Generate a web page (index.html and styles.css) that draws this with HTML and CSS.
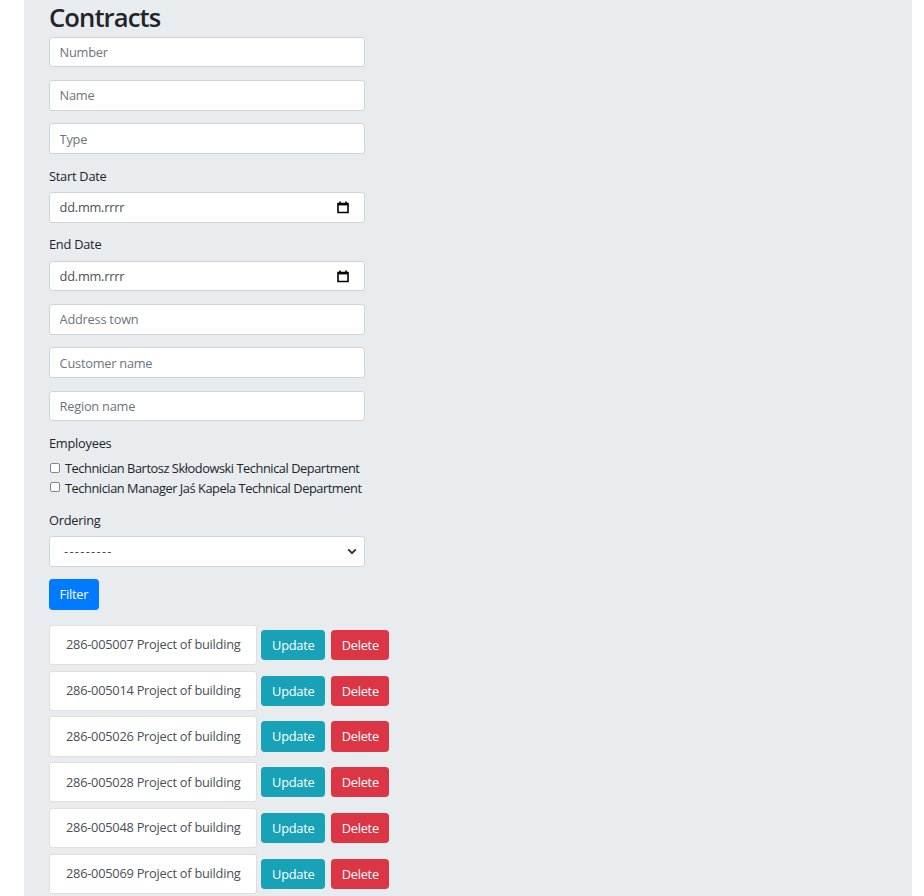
FILE: index.html
```html
<!DOCTYPE html>
<html lang="pl">
<head>
<meta charset="utf-8">
<title>Contracts</title>
<link rel="stylesheet" href="styles.css">
</head>
<body>
<div class="page">
  <main class="panel">
    <h2 class="title">Contracts</h2>
    <form class="filter-form">
      <div class="group"><input class="control" type="text" placeholder="Number"></div>
      <div class="group"><input class="control" type="text" placeholder="Name"></div>
      <div class="group"><input class="control" type="text" placeholder="Type"></div>
      <div class="group">
        <label class="label">Start Date</label>
        <div class="control date"><span>dd.mm.rrrr</span>
          <svg class="cal" width="14" height="14" viewBox="0 0 14 14"><path d="M2 3.5h10v9H2z" fill="none" stroke="#000" stroke-width="1.6"/><path d="M2 3h10v2.4H2z" fill="#000"/><path d="M4 1.5v2M10 1.5v2" stroke="#000" stroke-width="1.6"/></svg>
        </div>
      </div>
      <div class="group">
        <label class="label">End Date</label>
        <div class="control date"><span>dd.mm.rrrr</span>
          <svg class="cal" width="14" height="14" viewBox="0 0 14 14"><path d="M2 3.5h10v9H2z" fill="none" stroke="#000" stroke-width="1.6"/><path d="M2 3h10v2.4H2z" fill="#000"/><path d="M4 1.5v2M10 1.5v2" stroke="#000" stroke-width="1.6"/></svg>
        </div>
      </div>
      <div class="group"><input class="control" type="text" placeholder="Address town"></div>
      <div class="group"><input class="control" type="text" placeholder="Customer name"></div>
      <div class="group"><input class="control" type="text" placeholder="Region name"></div>
      <div class="group">
        <label class="label">Employees</label>
        <div class="checks">
          <label class="check"><input type="checkbox" class="box"> Technician Bartosz Skłodowski Technical Department</label>
          <label class="check"><input type="checkbox" class="box"> Technician Manager Jaś Kapela Technical Department</label>
        </div>
      </div>
      <div class="group">
        <label class="label">Ordering</label>
        <div class="control select"><span class="dashes">---------</span>
          <svg class="chev" width="10" height="7" viewBox="0 0 10 7"><path d="M1.2 1.4L5 5.2l3.8-3.8" fill="none" stroke="#333" stroke-width="2"/></svg>
        </div>
      </div>
      <button type="button" class="btn btn-primary">Filter</button>
    </form>
    <ul class="contracts">
      <li class="row"><span class="item">286-005007 Project of building</span><button class="btn btn-info">Update</button><button class="btn btn-danger">Delete</button></li>
      <li class="row"><span class="item">286-005014 Project of building</span><button class="btn btn-info">Update</button><button class="btn btn-danger">Delete</button></li>
      <li class="row"><span class="item">286-005026 Project of building</span><button class="btn btn-info">Update</button><button class="btn btn-danger">Delete</button></li>
      <li class="row"><span class="item">286-005028 Project of building</span><button class="btn btn-info">Update</button><button class="btn btn-danger">Delete</button></li>
      <li class="row"><span class="item">286-005048 Project of building</span><button class="btn btn-info">Update</button><button class="btn btn-danger">Delete</button></li>
      <li class="row"><span class="item">286-005069 Project of building</span><button class="btn btn-info">Update</button><button class="btn btn-danger">Delete</button></li>
    </ul>
  </main>
</div>
</body>
</html>
```

FILE: styles.css
```css
html, body {
  margin: 0;
  padding: 0;
  height: 100%;
  overflow: hidden;
  background: #fff;
}
body {
  font-family: "Open Sans", "Noto Sans", sans-serif;
  font-size: 12.8px;
  line-height: 1.5;
  letter-spacing: -0.24px;
  color: #212529;
}
.page {
  padding: 0 12px 0 24px;
  height: 100%;
}
.panel {
  background: #e9ecef;
  min-height: 100%;
  padding: 0 25px;
  box-sizing: border-box;
}
.title {
  margin: 0 0 3.4px;
  padding-top: 3px;
  font-size: 25.6px;
  line-height: 1.2;
  font-weight: 600;
  letter-spacing: -0.9px;
  color: #212529;
}
.filter-form {
  width: 316px;
  margin: 0 0 15px;
}
.group {
  margin-bottom: 12.8px;
}
.label {
  display: block;
  margin-bottom: 6.4px;
  line-height: 19.2px;
}
.control {
  display: flex;
  align-items: center;
  box-sizing: border-box;
  width: 100%;
  height: 30.4px;
  padding: 4.8px 9.6px;
  font-family: inherit;
  font-size: 12.8px;
  letter-spacing: -0.24px;
  color: #495057;
  background: #fff;
  border: 1px solid #ced4da;
  border-radius: 3.2px;
  outline: none;
}
.control::placeholder {
  color: #6c757d;
}
.date {
  justify-content: space-between;
  padding-right: 14px;
}
.cal {
  display: block;
}
.select {
  justify-content: space-between;
  padding-left: 14px;
  padding-right: 7px;
}
.dashes {
  letter-spacing: 1.3px;
}
.chev {
  display: block;
}
.checks {
  display: flex;
  flex-direction: column;
}
.check {
  display: flex;
  align-items: center;
  line-height: 19.2px;
  white-space: nowrap;
  letter-spacing: -0.44px;
}
.box {
  appearance: none;
  -webkit-appearance: none;
  flex: none;
  width: 10px;
  height: 10px;
  margin: 0 5px 0 1px;
  border: 1px solid #858585;
  border-radius: 2px;
  background: #fff;
  box-sizing: border-box;
  position: relative;
  top: -1px;
}
.btn {
  display: inline-block;
  box-sizing: border-box;
  height: 30.4px;
  padding: 0 9.6px;
  font-family: inherit;
  font-size: 12.8px;
  letter-spacing: -0.24px;
  line-height: 28.4px;
  color: #fff;
  border: 1px solid transparent;
  border-radius: 3.2px;
  cursor: pointer;
}
.btn-primary { background: #007bff; border-color: #007bff; }
.btn-info { background: #17a2b8; border-color: #17a2b8; }
.btn-danger { background: #dc3545; border-color: #dc3545; }
.contracts {
  list-style: none;
  margin: 0;
  padding: 0;
  display: flex;
  flex-direction: column;
  gap: 5.4px;
}
.row {
  display: flex;
  align-items: center;
}
.item {
  box-sizing: border-box;
  height: 40.4px;
  padding: 9.6px 16px;
  line-height: 19.2px;
  color: #495057;
  background: #fff;
  border: 1px solid rgba(0, 0, 0, 0.125);
  border-radius: 3.2px;
  white-space: nowrap;
}
.btn-info {
  margin-left: 4px;
}
.btn-danger {
  margin-left: 6px;
}
```
